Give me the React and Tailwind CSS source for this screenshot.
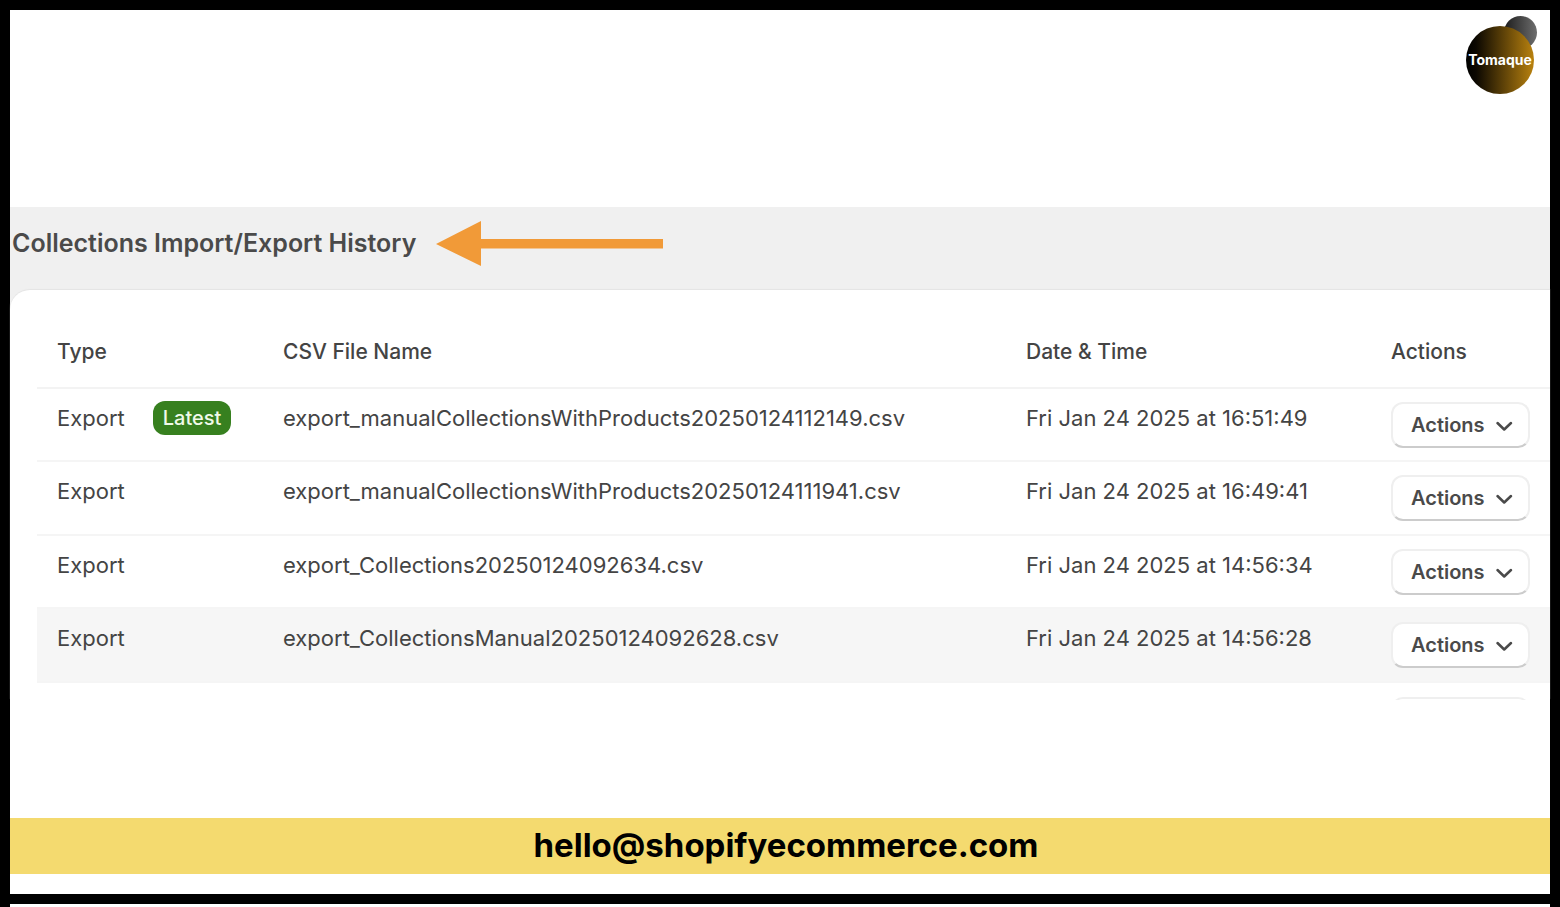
import React from "react";

const rows = [
  {
    file: "export_manualCollectionsWithProducts20250124112149.csv",
    date: "Fri Jan 24 2025 at 16:51:49",
    latest: true,
  },
  {
    file: "export_manualCollectionsWithProducts20250124111941.csv",
    date: "Fri Jan 24 2025 at 16:49:41",
  },
  {
    file: "export_Collections20250124092634.csv",
    date: "Fri Jan 24 2025 at 14:56:34",
  },
  {
    file: "export_CollectionsManual20250124092628.csv",
    date: "Fri Jan 24 2025 at 14:56:28",
    active: true,
  },
];

function Logo() {
  return (
    <svg
      className="w-[72px] h-[80px]"
      viewBox="0 0 72 80"
      role="img"
      aria-label="Tomaque"
    >
      <defs>
        <linearGradient id="logoGold" x1="0" y1="0" x2="1" y2="0">
          <stop offset="0%" stopColor="#000000" />
          <stop offset="15%" stopColor="#0c0801" />
          <stop offset="100%" stopColor="#b9820f" />
        </linearGradient>
        <linearGradient id="logoGrey" x1="0" y1="0" x2="1" y2="0">
          <stop offset="0%" stopColor="#1c1c1c" />
          <stop offset="100%" stopColor="#6e6e6e" />
        </linearGradient>
      </defs>
      <circle cx="54.500" cy="17.500" r="16.500" fill="url(#logoGrey)" />
      <circle cx="34" cy="45" r="34" fill="url(#logoGold)" />
      <text
        x="34"
        y="50"
        textAnchor="middle"
        fill="#ffffff"
        fontFamily="Inter, sans-serif"
        fontSize="14"
        fontWeight="700"
      >
        Tomaque
      </text>
    </svg>
  );
}

function ActionsButton() {
  return (
    <button
      type="button"
      className="flex h-[46px] w-[139px] items-center justify-between rounded-xl border-2 border-[#efefef] border-b-[#cccccc] bg-white pl-[18px] pr-[14px] text-[20px] font-semibold text-[#4a4a4a]"
    >
      Actions
      <svg
        className="h-4 w-5"
        viewBox="0 0 20 16"
        fill="none"
        stroke="currentColor"
        strokeWidth="2.5"
        strokeLinecap="round"
        strokeLinejoin="round"
        aria-hidden="true"
      >
        <path d="M3.500 6l6.700 6.500L17 6" />
      </svg>
    </button>
  );
}

function HistoryTable() {
  return (
    <table className="w-full table-fixed border-collapse text-left text-[22px] leading-7 text-[#444444]">
      <colgroup>
        <col className="w-[246px]" />
        <col />
        <col className="w-[365px]" />
        <col className="w-[159px]" />
      </colgroup>
      <thead>
        <tr className="h-[72px] border-b-2 border-[#f3f3f3] text-[21px]">
          <th scope="col" className="pl-5 font-medium">Type</th>
          <th scope="col" className="font-medium">CSV File Name</th>
          <th scope="col" className="font-medium">Date &amp; Time</th>
          <th scope="col" className="font-medium">Actions</th>
        </tr>
      </thead>
      <tbody>
        {rows.map((row) => (
          <tr
            key={row.file}
            className={`odd:h-[73px] even:h-[74px] border-b-2 border-[#f5f5f5] align-top ${
              row.active ? "bg-[#f6f6f6]" : "bg-white"
            }`}
          >
            <td className="pt-[15px] pl-5">
              <span className="flex items-center gap-7">
                Export
                {row.latest && (
                  <span className="-my-1 rounded-xl bg-[#37801f] px-[10px] py-[3px] text-[20px] font-medium text-[#f0fae9]">
                    Latest
                  </span>
                )}
              </span>
            </td>
            <td className="pt-[15px]">{row.file}</td>
            <td className="pt-[15px]">{row.date}</td>
            <td className="pt-[13px]">
              <ActionsButton />
            </td>
          </tr>
        ))}
      </tbody>
    </table>
  );
}

export default function App() {
  return (
    <div className="flex min-h-screen flex-col border-x-[10px] border-black bg-white font-[Inter,sans-serif]">
      <div className="h-[10px] shrink-0 bg-black" />
      <header className="flex h-[197px] justify-end pt-[5px] pr-[12px]">
        <Logo />
      </header>

      <main className="flex-1">
        <section className="bg-[#f0f0f0]">
          <div className="flex h-[83px] items-center gap-5 pb-[10px] pl-[2px]">
            <h1 className="text-[25px] font-semibold text-[#4a4a4a]">
              Collections Import/Export History
            </h1>
            <svg
              className="h-[46px] w-[227px]"
              viewBox="0 0 227 46"
              fill="#f19a38"
              aria-hidden="true"
            >
              <path d="M0 23L45 0v18h182v9.500H45V45z" />
            </svg>
          </div>
          <div className="rounded-tl-[20px] bg-white pt-[26px] pl-[27px] shadow-[0_-1px_1px_#e4e4e4]">
            <HistoryTable />
            {/* next row is cut off just below its top edge */}
            <div className="flex h-[17px] justify-end overflow-hidden pt-[14px] pr-[20px]">
              <div className="h-[46px] w-[139px] shrink-0 rounded-xl border-2 border-[#efefef]" />
            </div>
          </div>
        </section>
      </main>

      <footer className="shrink-0">
        <div className="flex h-14 items-center justify-center bg-[#f4da6f] pl-3">
          <a
            href="mailto:hello@shopifyecommerce.com"
            className="text-[33px] font-bold text-black"
          >
            hello@shopifyecommerce.com
          </a>
        </div>
        <div className="mt-5 mb-[3px] h-[10px] bg-black" />
      </footer>
    </div>
  );
}
